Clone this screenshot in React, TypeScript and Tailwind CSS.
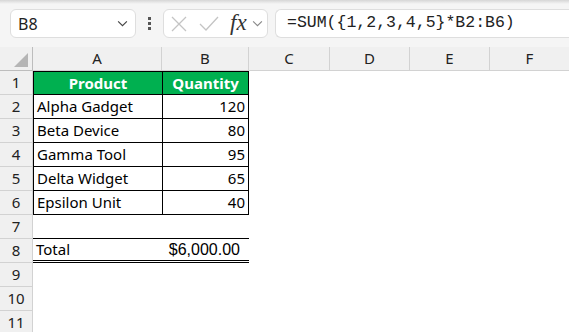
import React from "react";

const cols = [
    { name: "A", w: "w-[129px]" },
    { name: "B", w: "w-[87px]" },
    { name: "C", w: "w-[81px]" },
    { name: "D", w: "w-[80px]" },
    { name: "E", w: "w-[80px]" },
    { name: "F", w: "w-[80px]" },
];

const items = [
    { product: "Alpha Gadget", qty: "120" },
    { product: "Beta Device", qty: "80" },
    { product: "Gamma Tool", qty: "95" },
    { product: "Delta Widget", qty: "65" },
    { product: "Epsilon Unit", qty: "40" },
];

const cellFont = { fontFamily: "'Noto Sans', 'Open Sans', sans-serif" };

const RowHead: React.FC<{ n: number }> = ({ n }) => (
    <div className="w-[33px] h-full shrink-0 bg-[#f0f0f0] border-r border-b border-[#d2d2d2] flex items-center justify-center text-[15px] text-[#222]">
        {n}
    </div>
);

const Chevron: React.FC<{ className?: string }> = ({ className }) => (
    <svg viewBox="0 0 12 8" className={className} fill="none" stroke="currentColor" strokeWidth="1.3">
        <path d="M1 1.5 L6 6.5 L11 1.5" />
    </svg>
);

const FormulaBar: React.FC = () => (
    <div className="relative h-[47px] bg-[#f5f5f5] flex items-center pl-[10px] gap-0">
        <div className="absolute top-0 left-0 right-0 h-[4px] bg-gradient-to-b from-[#d6d6d6] to-[#f5f5f5]" />
        <div className="w-[126px] h-[29px] bg-white border border-[#dedede] rounded-[6px] flex items-center justify-between pl-[7px] pr-[7px]">
            <span className="text-[16px] text-[#222]" style={cellFont}>B8</span>
            <Chevron className="w-[11px] h-[7px] text-[#444]" />
        </div>
        <div className="w-[27px] flex flex-col items-center gap-[2px]">
            <span className="w-[3px] h-[3px] bg-[#555]" />
            <span className="w-[3px] h-[3px] bg-[#555]" />
            <span className="w-[3px] h-[3px] bg-[#555]" />
        </div>
        <div className="w-[105px] h-[29px] bg-white border border-[#dedede] rounded-[6px] flex items-center pl-[7px]">
            <svg viewBox="0 0 16 16" className="w-[16px] h-[16px] text-[#c4c4c4]" fill="none" stroke="currentColor" strokeWidth="1.3">
                <path d="M1 1 L15 15 M15 1 L1 15" />
            </svg>
            <svg viewBox="0 0 20 15" className="ml-[12px] w-[20px] h-[15px] text-[#c4c4c4]" fill="none" stroke="currentColor" strokeWidth="1.3">
                <path d="M1 8 L7 14 L19 1" />
            </svg>
            <span className="ml-[11px] text-[23px] italic text-[#333] leading-none -mt-[2px]" style={{ fontFamily: "'Liberation Serif', 'DejaVu Serif', serif" }}>
                fx
            </span>
            <Chevron className="ml-[5px] w-[11px] h-[7px] text-[#888]" />
        </div>
        <div className="ml-[7px] flex-1 h-[29px] bg-white border border-r-0 border-[#dedede] rounded-l-[6px] flex items-center pl-[11px]">
            <span className="text-[16.5px] text-[#222]" style={{ fontFamily: "'Liberation Mono', 'DejaVu Sans Mono', monospace" }}>
                =SUM({"{"}1,2,3,4,5{"}"}*B2:B6)
            </span>
        </div>
    </div>
);

const Sheet: React.FC = () => (
    <div className="bg-white" style={cellFont}>
        {/* column headers */}
        <div className="flex h-[24px]">
            <div className="relative w-[33px] shrink-0 bg-[#f0f0f0] border-r border-b border-[#bdbdbd]">
                <svg viewBox="0 0 14 14" className="absolute right-[4px] bottom-[3px] w-[14px] h-[14px]">
                    <path d="M14 0 L14 14 L0 14 Z" fill="#b5b5b5" />
                </svg>
            </div>
            {cols.map((c) => (
                <div key={c.name} className={`${c.w} shrink-0 bg-[#f0f0f0] border-r border-b border-[#d2d2d2] flex items-center justify-center text-[15px] text-[#222]`}>
                    {c.name}
                </div>
            ))}
        </div>

        {/* row 1 */}
        <div className="flex h-[24px]">
            <RowHead n={1} />
            <div className="w-[129px] shrink-0 bg-[#00b050] border border-r-0 border-black flex items-center justify-center text-[15px] font-bold text-white">Product</div>
            <div className="w-[87px] shrink-0 bg-[#00b050] border border-black flex items-center justify-center text-[15px] font-bold text-white">Quantity</div>
        </div>

        {items.map((it, i) => (
            <div key={it.product} className="flex h-[24px]">
                <RowHead n={i + 2} />
                <div className="w-[129px] shrink-0 border-l border-b border-black flex items-center pl-[3px] text-[15px] text-black">{it.product}</div>
                <div className="w-[87px] shrink-0 border-l border-r border-b border-black flex items-center justify-end pr-[3px] text-[15px] text-black">{it.qty}</div>
            </div>
        ))}

        {/* row 7 */}
        <div className="flex h-[24px]">
            <RowHead n={7} />
            <div className="w-[216px] shrink-0 border-b border-black" />
        </div>

        {/* row 8 */}
        <div className="flex h-[24px]">
            <RowHead n={8} />
            <div className="w-[216px] shrink-0 border-b-[3px] border-double border-black flex items-center justify-between pl-[3px] pr-[9px]">
                <span className="text-[15px] text-black">Total</span>
                <span className="text-[16px] text-black" style={{ fontFamily: "'Liberation Sans', Arial, sans-serif" }}>$6,000.00</span>
            </div>
        </div>

        {[9, 10, 11].map((n) => (
            <div key={n} className="flex h-[24px]">
                <RowHead n={n} />
            </div>
        ))}
    </div>
);

const App: React.FC = () => {
    return (
        <div className="w-[569px] h-[332px] overflow-hidden bg-white">
            <FormulaBar />
            <Sheet />
        </div>
    );
};

export default App;
